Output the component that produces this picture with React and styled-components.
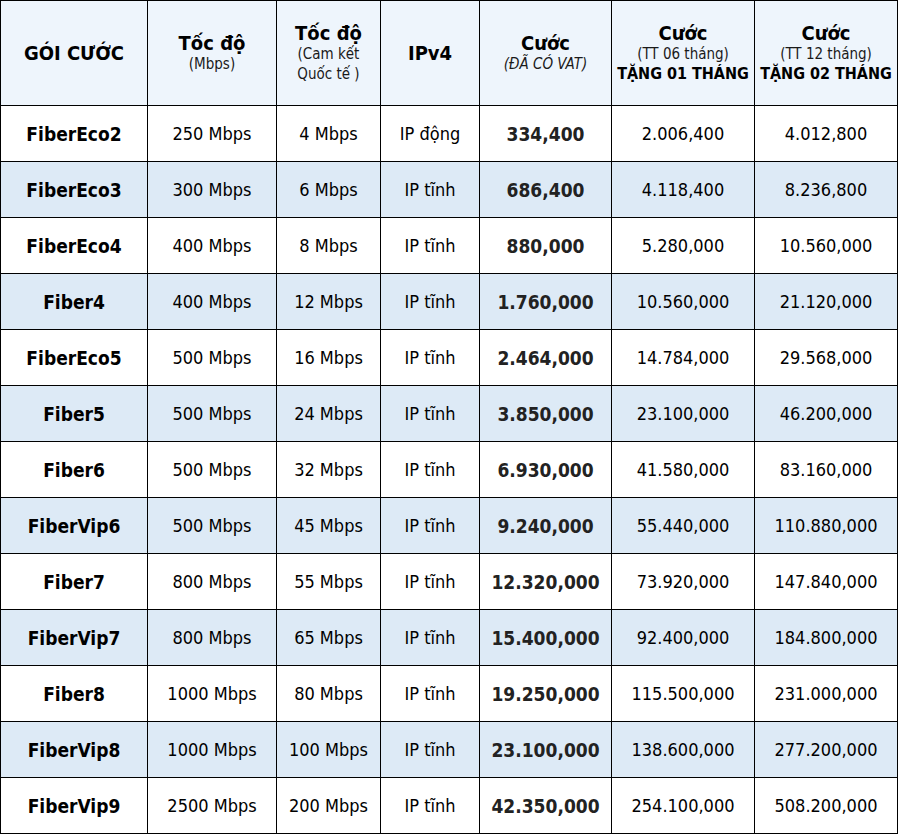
import React from 'react'
import styled, { createGlobalStyle } from 'styled-components'

const plans = [
    ['FiberEco2', '250 Mbps', '4 Mbps', 'IP động', '334,400', '2.006,400', '4.012,800'],
    ['FiberEco3', '300 Mbps', '6 Mbps', 'IP tĩnh', '686,400', '4.118,400', '8.236,800'],
    ['FiberEco4', '400 Mbps', '8 Mbps', 'IP tĩnh', '880,000', '5.280,000', '10.560,000'],
    ['Fiber4', '400 Mbps', '12 Mbps', 'IP tĩnh', '1.760,000', '10.560,000', '21.120,000'],
    ['FiberEco5', '500 Mbps', '16 Mbps', 'IP tĩnh', '2.464,000', '14.784,000', '29.568,000'],
    ['Fiber5', '500 Mbps', '24 Mbps', 'IP tĩnh', '3.850,000', '23.100,000', '46.200,000'],
    ['Fiber6', '500 Mbps', '32 Mbps', 'IP tĩnh', '6.930,000', '41.580,000', '83.160,000'],
    ['FiberVip6', '500 Mbps', '45 Mbps', 'IP tĩnh', '9.240,000', '55.440,000', '110.880,000'],
    ['Fiber7', '800 Mbps', '55 Mbps', 'IP tĩnh', '12.320,000', '73.920,000', '147.840,000'],
    ['FiberVip7', '800 Mbps', '65 Mbps', 'IP tĩnh', '15.400,000', '92.400,000', '184.800,000'],
    ['Fiber8', '1000 Mbps', '80 Mbps', 'IP tĩnh', '19.250,000', '115.500,000', '231.000,000'],
    ['FiberVip8', '1000 Mbps', '100 Mbps', 'IP tĩnh', '23.100,000', '138.600,000', '277.200,000'],
    ['FiberVip9', '2500 Mbps', '200 Mbps', 'IP tĩnh', '42.350,000', '254.100,000', '508.200,000'],
]

function App() {
    return (
        <>
            <GlobalStyle />
            <PriceTable>
                <HeadCell>
                    <Title>GÓI CƯỚC</Title>
                </HeadCell>
                <HeadCell>
                    <Title>Tốc độ</Title>
                    <Sub>(Mbps)</Sub>
                </HeadCell>
                <HeadCell>
                    <Title>Tốc độ</Title>
                    <Sub>(Cam kết</Sub>
                    <Sub>Quốc tế )</Sub>
                </HeadCell>
                <HeadCell>
                    <Title>IPv4</Title>
                </HeadCell>
                <HeadCell>
                    <Title>Cước</Title>
                    <Sub $italic>(ĐÃ CÓ VAT)</Sub>
                </HeadCell>
                <HeadCell>
                    <Title>Cước</Title>
                    <Sub>(TT 06 tháng)</Sub>
                    <Gift>TẶNG 01 THÁNG</Gift>
                </HeadCell>
                <HeadCell>
                    <Title>Cước</Title>
                    <Sub>(TT 12 tháng)</Sub>
                    <Gift>TẶNG 02 THÁNG</Gift>
                </HeadCell>
                {plans.map((row, i) =>
                    row.map((value, j) => (
                        <Cell
                            key={i + '-' + j}
                            $striped={i % 2 === 1}
                            $bold={j === 0 || j === 4}
                            $muted={j === 4}
                        >
                            {value}
                        </Cell>
                    ))
                )}
            </PriceTable>
        </>
    )
}

const GlobalStyle = createGlobalStyle`
body{
    margin:0;
    background:#fff;
    font-family:"DejaVu Sans Condensed", "DejaVu Sans", Verdana, sans-serif;
    color:#000;
}
`

const PriceTable = styled.div`
display:grid;
grid-template-columns:146px 128px 103px 98px 131px 142px 142px;
grid-template-rows:104px;
grid-auto-rows:55px;
gap:1px;
width:fit-content;
background:#000;
border:1px solid #000;
`

const HeadCell = styled.div`
display:flex;
flex-direction:column;
align-items:center;
justify-content:center;
background:#eef5fc;
text-align:center;
white-space:nowrap;
`

const Title = styled.div`
font-size:20px;
font-weight:700;
line-height:22px;
color:#000;
`

const Sub = styled.div`
font-size:15px;
line-height:20px;
color:#1a1a1a;
font-style:${props => props.$italic ? 'italic' : 'normal'};
`

const Gift = styled.div`
font-size:16px;
font-weight:700;
line-height:20px;
color:#000;
`

const Cell = styled.div`
display:flex;
align-items:center;
justify-content:center;
background:${props => props.$striped ? '#ddeaf6' : '#fff'};
font-size:${props => props.$bold ? '19px' : '18px'};
font-weight:${props => props.$bold ? 700 : 400};
color:${props => props.$muted ? '#222' : '#000'};
white-space:nowrap;
`

export default App
